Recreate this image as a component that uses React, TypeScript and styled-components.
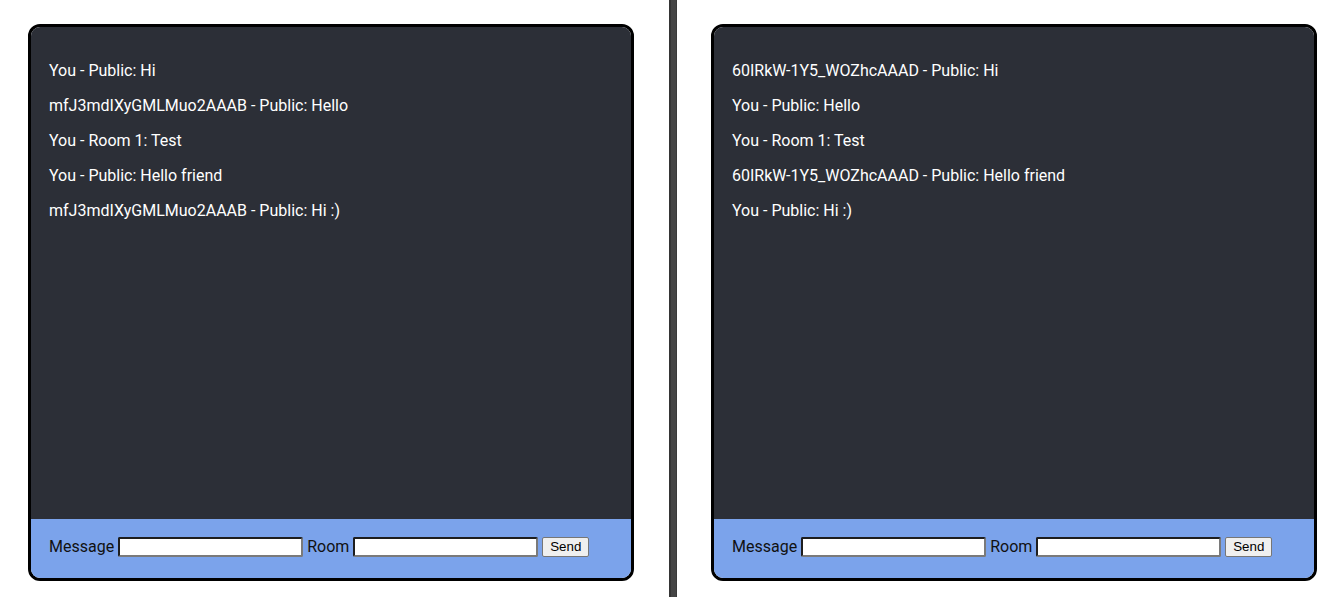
import React from "react";
import styled, { createGlobalStyle } from "styled-components";

const Global = createGlobalStyle`
  html, body { margin: 0; padding: 0; background: #ffffff; }
  body { font-family: Roboto, "Noto Sans", sans-serif; }
  #root { width: 1344px; height: 597px; }
  * { box-sizing: border-box; }
`;

const Page = styled.div`
  display: flex;
  width: 1344px;
  height: 597px;
  background: #ffffff;
`;

const Pane = styled.div<{ $side: "left" | "right" }>`
  flex: ${(p) => (p.$side === "left" ? "0 0 669px" : "1 1 auto")};
  display: flex;
  padding: ${(p) => (p.$side === "left" ? "24px 35px 16px 28px" : "24px 27px 16px 34px")};
`;

const Divider = styled.div`
  flex: 0 0 8px;
  background: #454545;
  border-left: 2px solid #353535;
  border-right: 1px solid #3a3a3a;
`;

const Chat = styled.div`
  flex: 1;
  display: flex;
  flex-direction: column;
  border: 3px solid #000000;
  border-radius: 12px;
  overflow: hidden;
`;

const Messages = styled.div`
  flex: 1;
  display: flex;
  flex-direction: column;
  gap: 16px;
  padding: 34px 18px 18px;
  background: #2c2f37;
`;

const Message = styled.div`
  font-family: Roboto, sans-serif;
  font-size: 16px;
  line-height: 19px;
  color: #ffffff;
  white-space: nowrap;
`;

const Form = styled.form`
  display: flex;
  align-items: center;
  gap: 4px;
  padding: 18px 18px 21px;
  background: #7ba3eb;
`;

const Label = styled.label`
  font-family: Roboto, sans-serif;
  font-size: 16px;
  line-height: 20px;
  color: #111111;
`;

const Input = styled.input`
  width: 185px;
  height: 20px;
  padding: 1px 2px;
  border-width: 2px;
  border-style: solid;
  border-color: #1e1e1e #7a7a7a #7a7a7a #1e1e1e;
  border-radius: 2px;
  background: #ffffff;
  font-family: "Liberation Sans", Arial, sans-serif;
  font-size: 13px;
  outline: none;
`;

const Button = styled.button`
  width: 47px;
  height: 20px;
  padding: 0;
  border: 1px solid #767676;
  border-radius: 2px;
  background: #efefef;
  color: #000000;
  font-family: "Liberation Sans", Arial, sans-serif;
  font-size: 13.33px;
  line-height: 18px;
`;

const ChatWindow: React.FC<{ messages: string[] }> = ({ messages }) => (
  <Chat>
    <Messages>
      {messages.map((m, i) => (
        <Message key={i}>{m}</Message>
      ))}
    </Messages>
    <Form onSubmit={(e) => e.preventDefault()}>
      <Label>Message</Label>
      <Input type="text" />
      <Label>Room</Label>
      <Input type="text" />
      <Button type="submit">Send</Button>
    </Form>
  </Chat>
);

const left = [
  "You - Public: Hi",
  "mfJ3mdIXyGMLMuo2AAAB - Public: Hello",
  "You - Room 1: Test",
  "You - Public: Hello friend",
  "mfJ3mdIXyGMLMuo2AAAB - Public: Hi :)",
];

const right = [
  "60IRkW-1Y5_WOZhcAAAD - Public: Hi",
  "You - Public: Hello",
  "You - Room 1: Test",
  "60IRkW-1Y5_WOZhcAAAD - Public: Hello friend",
  "You - Public: Hi :)",
];

export default function App() {
  return (
    <>
      <Global />
      <Page>
        <Pane $side="left">
          <ChatWindow messages={left} />
        </Pane>
        <Divider />
        <Pane $side="right">
          <ChatWindow messages={right} />
        </Pane>
      </Page>
    </>
  );
}
